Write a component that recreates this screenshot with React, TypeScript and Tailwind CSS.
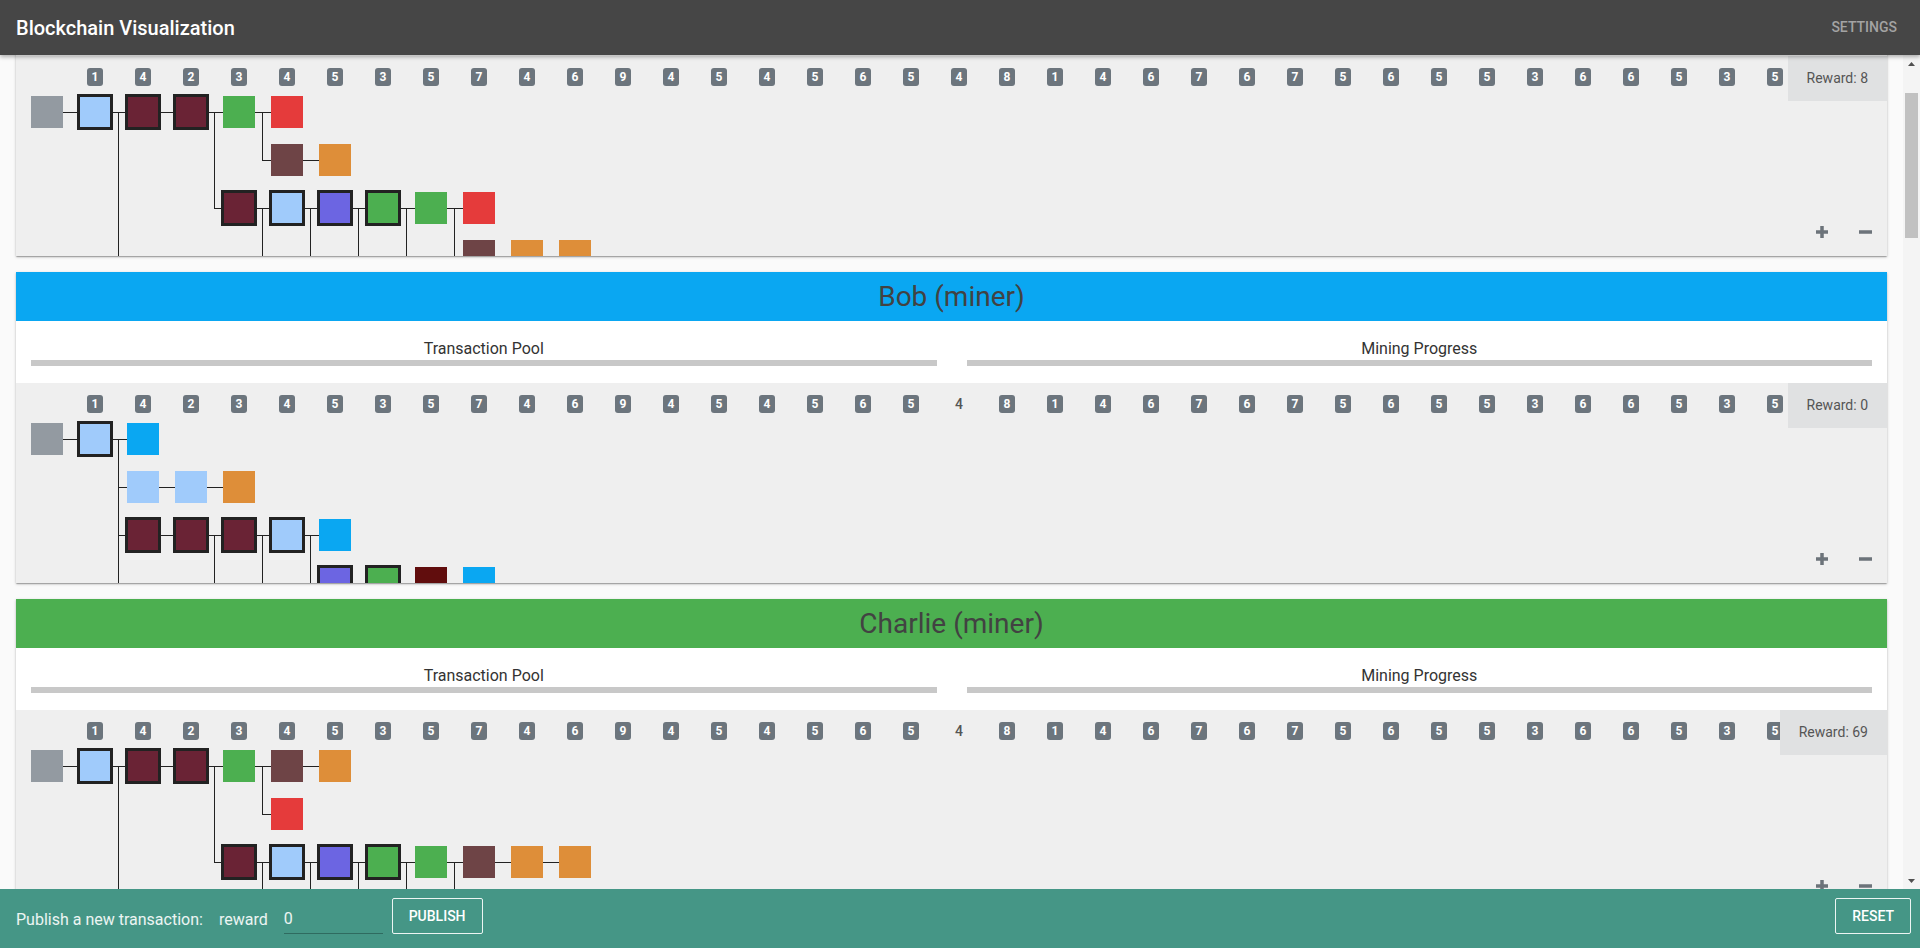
import React, { useLayoutEffect, useRef } from 'react';

type TreeNode = { c: number; r: number; color: string; b?: boolean; p?: number };

const C = {
  gray: '#939aa1',
  lb: '#a0cbfb',
  maroon: '#6a2335',
  green: '#4caf50',
  red: '#e53b3b',
  brown: '#6e4446',
  orange: '#de8e39',
  purple: '#6c65e2',
  blue: '#0aa7f2',
  dark: '#610d0d',
};

const BADGES = [1, 4, 2, 3, 4, 5, 3, 5, 7, 4, 6, 9, 4, 5, 4, 5, 6, 5, 4, 8, 1, 4, 6, 7, 6, 7, 5, 6, 5, 5, 3, 6, 6, 5, 3, 5];

// alice's view of the chain
const aliceTree: TreeNode[] = [
  { c: 0, r: 0, color: C.gray },
  { c: 1, r: 0, color: C.lb, b: true, p: 0 },
  { c: 2, r: 0, color: C.maroon, b: true, p: 1 },
  { c: 3, r: 0, color: C.maroon, b: true, p: 2 },
  { c: 4, r: 0, color: C.green, p: 3 },
  { c: 5, r: 0, color: C.red, p: 4 },
  { c: 5, r: 1, color: C.brown, p: 4 },
  { c: 6, r: 1, color: C.orange, p: 6 },
  { c: 4, r: 2, color: C.maroon, b: true, p: 3 },
  { c: 5, r: 2, color: C.lb, b: true, p: 8 },
  { c: 6, r: 2, color: C.purple, b: true, p: 9 },
  { c: 7, r: 2, color: C.green, b: true, p: 10 },
  { c: 8, r: 2, color: C.green, p: 11 },
  { c: 9, r: 2, color: C.red, p: 12 },
  { c: 9, r: 3, color: C.brown, p: 12 },
  { c: 10, r: 3, color: C.orange, p: 14 },
  { c: 11, r: 3, color: C.orange, p: 15 },
  { c: 2, r: 5, color: C.lb, p: 1 },
  { c: 5, r: 4, color: C.lb, p: 8 },
  { c: 6, r: 4, color: C.lb, p: 9 },
  { c: 7, r: 4, color: C.lb, p: 10 },
  { c: 8, r: 4, color: C.lb, p: 11 },
];

const bobTree: TreeNode[] = [
  { c: 0, r: 0, color: C.gray },
  { c: 1, r: 0, color: C.lb, b: true, p: 0 },
  { c: 2, r: 0, color: C.blue, p: 1 },
  { c: 2, r: 1, color: C.lb, p: 1 },
  { c: 3, r: 1, color: C.lb, p: 3 },
  { c: 4, r: 1, color: C.orange, p: 4 },
  { c: 2, r: 2, color: C.maroon, b: true, p: 1 },
  { c: 3, r: 2, color: C.maroon, b: true, p: 6 },
  { c: 4, r: 2, color: C.maroon, b: true, p: 7 },
  { c: 5, r: 2, color: C.lb, b: true, p: 8 },
  { c: 6, r: 2, color: C.blue, p: 9 },
  { c: 6, r: 3, color: C.purple, b: true, p: 9 },
  { c: 7, r: 3, color: C.green, b: true, p: 11 },
  { c: 8, r: 3, color: C.dark, p: 12 },
  { c: 9, r: 3, color: C.blue, p: 13 },
  { c: 2, r: 5, color: C.lb, p: 1 },
  { c: 4, r: 4, color: C.lb, p: 7 },
  { c: 5, r: 4, color: C.lb, p: 8 },
];

const charlieTree: TreeNode[] = [
  { c: 0, r: 0, color: C.gray },
  { c: 1, r: 0, color: C.lb, b: true, p: 0 },
  { c: 2, r: 0, color: C.maroon, b: true, p: 1 },
  { c: 3, r: 0, color: C.maroon, b: true, p: 2 },
  { c: 4, r: 0, color: C.green, p: 3 },
  { c: 5, r: 0, color: C.brown, p: 4 },
  { c: 6, r: 0, color: C.orange, p: 5 },
  { c: 5, r: 1, color: C.red, p: 4 },
  { c: 4, r: 2, color: C.maroon, b: true, p: 3 },
  { c: 5, r: 2, color: C.lb, b: true, p: 8 },
  { c: 6, r: 2, color: C.purple, b: true, p: 9 },
  { c: 7, r: 2, color: C.green, b: true, p: 10 },
  { c: 8, r: 2, color: C.green, p: 11 },
  { c: 9, r: 2, color: C.brown, p: 12 },
  { c: 10, r: 2, color: C.orange, p: 13 },
  { c: 11, r: 2, color: C.orange, p: 14 },
  { c: 2, r: 5, color: C.lb, p: 1 },
  { c: 5, r: 4, color: C.lb, p: 8 },
  { c: 6, r: 4, color: C.lb, p: 9 },
  { c: 7, r: 4, color: C.lb, p: 10 },
  { c: 8, r: 4, color: C.lb, p: 11 },
  { c: 9, r: 4, color: C.lb, p: 12 },
];

const cx = (c: number) => 31 + 48 * c;
const cy = (r: number) => 56 + 48 * r;

const Tree = ({ nodes }: { nodes: TreeNode[] }) => (
  <svg className="absolute left-0 top-0" width="100%" height="200" shapeRendering="crispEdges">
    {nodes.map((n, i) => {
      if (n.p === undefined) return null;
      const p = nodes[n.p];
      const x1 = cx(p.c);
      const y1 = cy(p.r) + 0.5;
      const x2 = cx(n.c);
      const y2 = cy(n.r) + 0.5;
      const d = p.r === n.r ? `M${x1} ${y1}H${x2}` : `M${x1} ${y1}H${x1 + 23.5}V${y2}H${x2}`;
      return <path key={`l${i}`} d={d} stroke="#222" strokeWidth="1" fill="none" />;
    })}
    {nodes.map((n, i) =>
      n.b ? (
        <rect key={`b${i}`} x={cx(n.c) - 16.5} y={cy(n.r) - 16.5} width="33" height="33" fill={n.color} stroke="#222" strokeWidth="3" />
      ) : (
        <rect key={`b${i}`} x={cx(n.c) - 16} y={cy(n.r) - 16} width="32" height="32" fill={n.color} />
      )
    )}
  </svg>
);

const ZoomControls = () => (
  <div className="absolute bottom-[18px] right-[15px] flex items-center gap-[31px]">
    <svg width="12" height="12" viewBox="0 0 12 12">
      <rect x="4.25" y="0" width="3.5" height="12" fill="#6c737a" />
      <rect x="0" y="4.25" width="12" height="3.5" fill="#6c737a" />
    </svg>
    <svg width="13" height="12" viewBox="0 0 13 12">
      <rect x="0" y="4.25" width="13" height="3.5" fill="#6c737a" />
    </svg>
  </div>
);

interface ChainProps {
  nodes: TreeNode[];
  reward: number;
  lightIndex?: number;
}

const ChainArea: React.FC<ChainProps> = ({ nodes, reward, lightIndex }) => (
  <div className="relative h-[200px] overflow-hidden bg-[#efefef]">
    <Tree nodes={nodes} />
    <div className="relative flex gap-[32px] pl-[71px] pt-[12px]">
      {BADGES.map((v, i) =>
        i === lightIndex ? (
          <span key={i} className="flex h-[18px] w-[16px] shrink-0 items-center justify-center text-[14px] font-medium leading-none text-[#555]">
            {v}
          </span>
        ) : (
          <span key={i} className="flex h-[18px] w-[16px] shrink-0 items-center justify-center rounded-[3px] bg-[#6c757d] text-[12px] font-bold leading-none text-white">
            {v}
          </span>
        )
      )}
    </div>
    <div className="absolute right-0 top-0 flex h-[45px] items-center bg-[#e0e1e2] px-[19px] text-[14px] text-[#555]">
      Reward: {reward}
    </div>
    <ZoomControls />
  </div>
);

interface PanelProps {
  name: string;
  headerClass: string;
  nodes: TreeNode[];
  reward: number;
  lightIndex?: number;
}

const Panel: React.FC<PanelProps> = ({ name, headerClass, nodes, reward, lightIndex }) => (
  <div className="shrink-0 bg-white shadow-[0_1px_3px_rgba(0,0,0,0.2),0_1px_1px_rgba(0,0,0,0.14),0_2px_1px_-1px_rgba(0,0,0,0.12)]">
    <div className={`flex h-[49px] items-center justify-center text-[28px] text-[#424242] ${headerClass}`}>{name}</div>
    <div className="flex gap-[30px] px-[15px] pb-[17px] pt-[18px]">
      <div className="flex-1">
        <div className="text-center text-[16px] leading-[20px] text-[#333]">Transaction Pool</div>
        <div className="mt-[1px] h-[6px] bg-[#c8c8c8]" />
      </div>
      <div className="flex-1">
        <div className="text-center text-[16px] leading-[20px] text-[#333]">Mining Progress</div>
        <div className="mt-[1px] h-[6px] bg-[#c8c8c8]" />
      </div>
    </div>
    <ChainArea nodes={nodes} reward={reward} lightIndex={lightIndex} />
  </div>
);

const others: { name: string; headerClass: string }[] = [
  { name: 'Dave (miner)', headerClass: 'bg-[#e53b3b]' },
  { name: 'Eve (miner)', headerClass: 'bg-[#de8e39]' },
  { name: 'Frank (miner)', headerClass: 'bg-[#6c65e2]' },
  { name: 'Grace (miner)', headerClass: 'bg-[#6e4446]' },
  { name: 'Heidi (miner)', headerClass: 'bg-[#6a2335]' },
  { name: 'Ivan (miner)', headerClass: 'bg-[#610d0d]' },
  { name: 'Judy (miner)', headerClass: 'bg-[#939aa1]' },
  { name: 'Mallory (miner)', headerClass: 'bg-[#a0cbfb]' },
  { name: 'Niaj (miner)', headerClass: 'bg-[#0aa7f2]' },
  { name: 'Olivia (miner)', headerClass: 'bg-[#4caf50]' },
  { name: 'Peggy (miner)', headerClass: 'bg-[#de8e39]' },
];

// the browser hides native scrollbars, so the track is drawn by hand
const ScrollTrack = () => (
  <div className="flex w-[17px] shrink-0 flex-col bg-[#f4f4f4]">
    <div className="flex h-[17px] items-center justify-center">
      <svg width="7" height="4" viewBox="0 0 7 4">
        <path d="M0 4L3.5 0L7 4Z" fill="#505050" />
      </svg>
    </div>
    <div className="relative flex-1">
      <div className="absolute left-[2px] right-[2px] top-[21px] h-[145px] bg-[#c1c1c1]" />
    </div>
    <div className="flex h-[17px] items-center justify-center">
      <svg width="7" height="4" viewBox="0 0 7 4">
        <path d="M0 0L3.5 4L7 0Z" fill="#505050" />
      </svg>
    </div>
  </div>
);

export default function App() {
  const scrollRef = useRef<HTMLDivElement>(null);

  useLayoutEffect(() => {
    if (scrollRef.current) scrollRef.current.scrollTop = 126;
  }, []);

  return (
    <div className="flex h-screen flex-col overflow-hidden bg-[#fafafa] font-['Roboto',sans-serif]">
      <header className="relative z-10 flex h-[55px] shrink-0 items-center justify-between bg-[#464646] pl-4 pr-[23px] shadow-[0_2px_4px_rgba(0,0,0,0.3)]">
        <h1 className="text-[20px] font-medium text-white">Blockchain Visualization</h1>
        <span className="text-[14px] font-medium text-[#a3a3a3]">SETTINGS</span>
      </header>

      <div className="flex min-h-0 flex-1">
        <main ref={scrollRef} className="flex-1 overflow-y-scroll [scrollbar-width:none]">
          <div className="flex flex-col gap-4 p-4">
            <Panel name="Alice (miner)" headerClass="bg-[#a0cbfb]" nodes={aliceTree} reward={8} />
            <Panel name="Bob (miner)" headerClass="bg-[#0aa7f2]" nodes={bobTree} reward={0} lightIndex={18} />
            <Panel name="Charlie (miner)" headerClass="bg-[#4caf50]" nodes={charlieTree} reward={69} lightIndex={18} />
            {others.map((o) => (
              <Panel key={o.name} name={o.name} headerClass={o.headerClass} nodes={charlieTree} reward={0} />
            ))}
          </div>
        </main>
        <ScrollTrack />
      </div>

      <footer className="flex h-[59px] shrink-0 items-center bg-[#459686] pl-4 pr-[9px] text-[16px] text-white/90">
        <span className="mt-[3px]">Publish a new transaction:</span>
        <span className="ml-4 mt-[3px]">reward</span>
        <input
          defaultValue="0"
          className="mb-[5px] ml-4 h-[36px] w-[99px] border-b border-[#2f6b60] bg-transparent pt-[5px] text-[16px] text-white/90 outline-none"
        />
        <button className="mb-[5px] ml-[9px] h-[36px] rounded-[2px] border border-white/90 px-4 text-[14px] font-medium text-white">
          PUBLISH
        </button>
        <button className="mb-[5px] ml-auto h-[36px] rounded-[2px] border border-white/90 px-4 text-[14px] font-medium text-white">
          RESET
        </button>
      </footer>
    </div>
  );
}
